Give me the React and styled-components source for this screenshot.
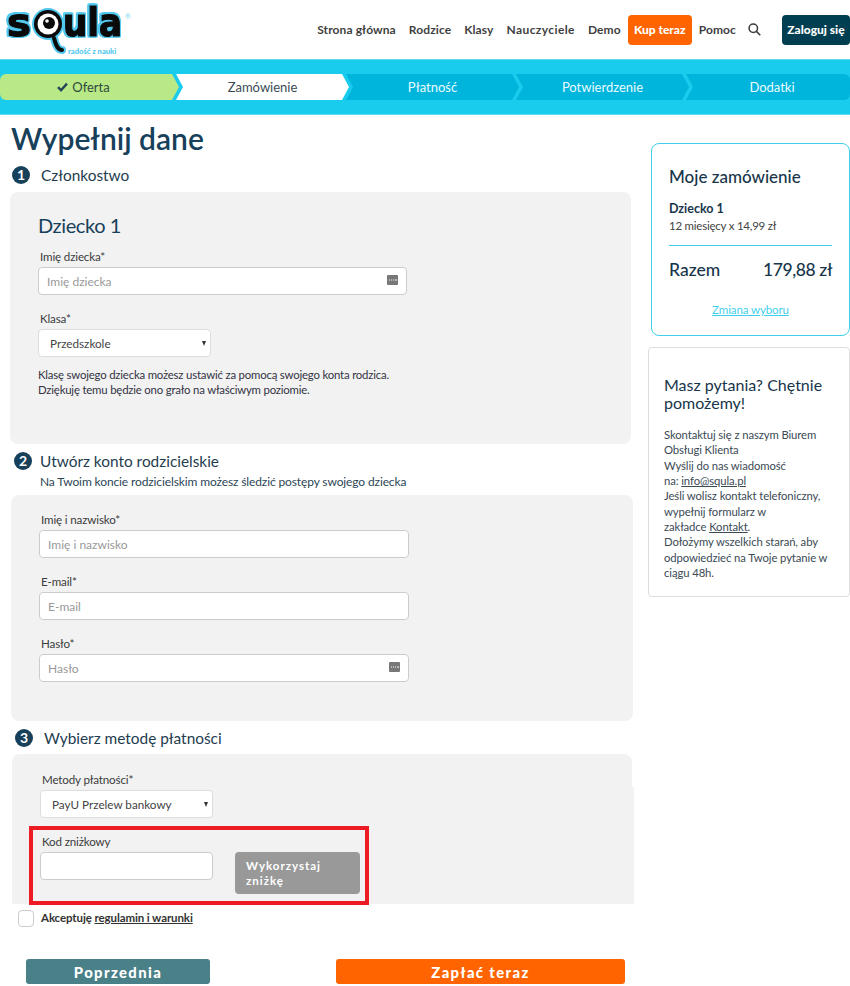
import React from 'react';
import styled, { createGlobalStyle } from 'styled-components';

const Global = createGlobalStyle`
  html, body { margin: 0; padding: 0; background: #fff; }
  body { font-family: Lato, "Noto Sans", sans-serif; color: #1b3a4b; overflow: hidden; }
  * { box-sizing: border-box; }
`;

const Page = styled.div`
  width: 850px;
  height: 986px;
  overflow: hidden;
  background: #fff;
`;

const Header = styled.header`
  height: 59px;
  display: flex;
  align-items: center;
  justify-content: space-between;
`;

const LogoBox = styled.svg`
  display: block;
  width: 135px;
  height: 59px;
`;

const Nav = styled.nav`
  display: flex;
  align-items: center;
  height: 30px;
`;

const NavLink = styled.a`
  font-size: 12px;
  font-weight: 700;
  letter-spacing: ${p => p.$ls ?? 0.1}px;
  color: #3f3f3f;
  margin-right: ${p => p.$gap ?? 13}px;
  white-space: nowrap;
`;

const NavButton = styled.a`
  display: flex;
  align-items: center;
  justify-content: center;
  height: 30px;
  width: ${p => p.$w}px;
  margin-right: ${p => p.$gap ?? 0}px;
  border-radius: 4px;
  background: ${p => p.$bg};
  color: #fff;
  font-size: 12px;
  font-weight: 900;
  white-space: nowrap;
`;

const SearchIcon = styled.svg`
  width: 13px;
  height: 13px;
  margin-right: 21px;
  margin-top: -1px;
  display: block;
`;

const StepBand = styled.div`
  height: 56px;
  padding: 14px 0;
  background: #19cbec;
  border-top: 1px solid #5fdcf2;
  border-bottom: 1px solid #5fdcf2;
  display: flex;
  align-items: flex-start;
`;

const Step = styled.div`
  height: 26px;
  flex: ${p => (p.$last ? '1' : `0 0 ${p.$first ? 179 : 173}px`)};
  margin-left: ${p => (p.$first ? 0 : -3)}px;
  padding: ${p => (p.$first ? '0 12px 0 0' : p.$last ? '0 0 0 8px' : '0')};
  display: flex;
  align-items: center;
  justify-content: center;
  gap: 4px;
  font-size: 13px;
  background: ${p => p.$bg};
  color: ${p => p.$color};
  border-radius: ${p => (p.$first ? '6px 0 0 6px' : p.$last ? '0 6px 6px 0' : '0')};
  clip-path: ${p =>
    p.$first
      ? 'polygon(0 0, calc(100% - 7px) 0, 100% 50%, calc(100% - 7px) 100%, 0 100%)'
      : p.$last
      ? 'polygon(0 0, 100% 0, 100% 100%, 0 100%, 7px 50%)'
      : 'polygon(0 0, calc(100% - 7px) 0, 100% 50%, calc(100% - 7px) 100%, 0 100%, 7px 50%)'};
`;

const Main = styled.main`
  display: flex;
  align-items: flex-start;
`;

const Left = styled.section`
  flex: 0 0 640px;
  width: 640px;
`;

const Right = styled.aside`
  flex: 1;
  padding-top: 28px;
  display: flex;
  flex-direction: column;
  align-items: flex-end;
`;

const Title = styled.h1`
  margin: 5px 0 0 11px;
  font-size: 30px;
  line-height: 36px;
  font-weight: 600;
  color: #17405a;
`;

const SectionHead = styled.div`
  display: flex;
  align-items: center;
  height: 18px;
  margin: ${p => p.$top}px 0 0 ${p => p.$left}px;
  gap: ${p => p.$gap}px;
`;

const Bullet = styled.span`
  flex: 0 0 18px;
  width: 18px;
  height: 18px;
  border-radius: 50%;
  background: #17405a;
  color: #fff;
  font-size: 14px;
  font-weight: 700;
  line-height: 18px;
  text-align: center;
`;

const SectionTitle = styled.h2`
  margin: -1px 0 0;
  font-size: 15.4px;
  font-weight: 400;
  color: #1f3d4f;
  white-space: nowrap;
`;

const SectionSub = styled.p`
  margin: 4px 0 0 40px;
  font-size: 12px;
  letter-spacing: -0.12px;
  line-height: 16px;
  color: #2c4656;
`;

const Panel = styled.div`
  position: relative;
  background: #f2f2f2;
  border-radius: ${p => (p.$open ? '8px 8px 0 0' : '8px')};
  margin: ${p => p.$top}px 0 0 ${p => p.$left}px;
  width: ${p => p.$w}px;
  height: ${p => p.$h}px;
  padding: ${p => p.$pad};
`;

const PanelStep = styled.span`
  position: absolute;
  right: -2px;
  top: 33px;
  bottom: 0;
  width: 2px;
  background: #f2f2f2;
`;

const ChildName = styled.h3`
  margin: 0 0 11px;
  font-size: 20px;
  letter-spacing: -0.4px;
  line-height: 26px;
  font-weight: 400;
  color: #17405a;
`;

const Label = styled.label`
  display: block;
  margin: 0 0 3px 2px;
  padding-top: 1px;
  font-size: 11.6px;
  letter-spacing: -0.15px;
  line-height: 14px;
  color: #3c3c3c;
`;

const Field = styled.div`
  position: relative;
  width: ${p => p.$w}px;
  margin-bottom: ${p => p.$mb ?? 16}px;
`;

const Input = styled.input`
  display: block;
  width: 100%;
  height: 28px;
  padding: 0 8px;
  border: 1px solid #ccc;
  border-radius: 4px;
  background: #fff;
  font-family: Lato, sans-serif;
  font-size: 12px;
  color: #333;
  &::placeholder { color: #999; opacity: 1; }
`;

const KeyIcon = styled.svg`
  position: absolute;
  right: 9px;
  top: 8px;
  width: 11px;
  height: 10px;
`;

const SelectWrap = styled.div`
  position: relative;
  width: 173px;
  &::after {
    content: '';
    position: absolute;
    right: 5px;
    top: 12px;
    border-left: 2.5px solid transparent;
    border-right: 2.5px solid transparent;
    border-top: 5px solid #333;
    pointer-events: none;
  }
`;

const Select = styled.select`
  display: block;
  width: 100%;
  height: 28px;
  padding: 0 0 0 11px;
  appearance: none;
  border: 1px solid #ddd;
  border-radius: 4px;
  background: #fff;
  font-family: Lato, sans-serif;
  font-size: 11.7px;
  color: #444;
`;

const Help = styled.p`
  margin: 10px 0 0;
  font-size: 11.4px;
  letter-spacing: -0.2px;
  line-height: 15px;
  color: #334;
`;

const RedBox = styled.div`
  width: 340px;
  height: 79px;
  margin: 8px 0 0 -11px;
  padding: 4px 0 0 7px;
  border: 4px solid #ed1c24;
`;

const RedRow = styled.div`
  display: flex;
  align-items: flex-start;
  gap: 22px;
`;

const DiscountButton = styled.button`
  width: 125px;
  height: 42px;
  padding: 0 11px;
  border: 0;
  border-radius: 4px;
  background: #999;
  color: #fff;
  font-family: Lato, sans-serif;
  font-size: 11.5px;
  font-weight: 700;
  letter-spacing: 1px;
  line-height: 15px;
  text-align: left;
`;

const TermsRow = styled.div`
  display: flex;
  align-items: center;
  gap: 7px;
  margin: 6px 0 0 18px;
  font-size: 11.5px;
  font-weight: 700;
  letter-spacing: -0.1px;
  color: #333;
`;

const CheckBox = styled.span`
  width: 16px;
  height: 17px;
  background: #fff;
  border: 1px solid #ccc;
  border-radius: 4px;
`;

const TermsText = styled.span`
  margin-top: -3px;
`;

const Underlined = styled.a`
  text-decoration: underline;
  color: ${p => p.$color ?? 'inherit'};
`;

const Actions = styled.div`
  display: flex;
  margin: 32px 0 0 26px;
  gap: 126px;
`;

const ActionButton = styled.button`
  width: ${p => p.$w}px;
  height: 25px;
  border: 0;
  border-radius: 3px;
  background: ${p => p.$bg};
  color: #fff;
  font-family: Lato, sans-serif;
  font-size: 14.8px;
  font-weight: 900;
  letter-spacing: 1.4px;
`;

const OrderCard = styled.div`
  width: 199px;
  height: 193px;
  padding: 22px 17px 0;
  border: 1px solid #40d0ec;
  border-radius: 8px;
`;

const CardTitle = styled.h3`
  margin: 0;
  font-size: ${p => p.$size}px;
  line-height: ${p => p.$lh}px;
  font-weight: ${p => p.$weight};
  color: #17354a;
`;

const OrderName = styled.div`
  margin-top: 13px;
  font-size: 12.5px;
  line-height: 16px;
  font-weight: 700;
  color: #17354a;
`;

const OrderLine = styled.div`
  font-size: 11.5px;
  letter-spacing: -0.23px;
  line-height: 17px;
  color: #444;
`;

const Rule = styled.div`
  margin-top: 11px;
  height: 1px;
  background: #40d0ec;
`;

const TotalRow = styled.div`
  display: flex;
  justify-content: space-between;
  margin-top: 13px;
  font-size: 17.5px;
  line-height: 22px;
  font-weight: 500;
  color: #17354a;
`;

const TotalValue = styled.span`
  letter-spacing: -0.4px;
`;

const ChangeLink = styled.div`
  margin-top: 22px;
  text-align: center;
  font-size: 11.5px;
  letter-spacing: -0.1px;
`;

const HelpCard = styled.div`
  width: 202px;
  height: 250px;
  margin-top: 11px;
  padding: 28px 15px 0;
  border: 1px solid #ddd;
  border-radius: 4px;
`;

const HelpText = styled.p`
  margin: 15px 0 0;
  font-size: 11.3px;
  letter-spacing: -0.1px;
  line-height: 15.35px;
  color: #3b4a55;
`;

const LogoLetters = styled.g`
  font-family: "DejaVu Sans", sans-serif;
  font-weight: 700;
  font-size: 39px;
  fill: #0a0a0a;
  stroke: #0a0a0a;
  stroke-width: 1.2px;
  filter: drop-shadow(1.5px 0 0 #52c8ee) drop-shadow(-1.5px 0 0 #52c8ee) drop-shadow(0 1.5px 0 #52c8ee) drop-shadow(0 -1.5px 0 #52c8ee);
`;

const Key = () => (
  <KeyIcon viewBox="0 0 11 10">
    <rect width="11" height="10" rx="1" fill="#777" />
    <path d="M2 5h1M4 5h1M6 5h1M9 4v2" stroke="#fff" strokeWidth="1" />
  </KeyIcon>
);

const Logo = () => (
  <LogoBox viewBox="0 0 135 59">
    <LogoLetters>
      <text x="7" y="36" textLength="24" lengthAdjust="spacingAndGlyphs">s</text>
      <text x="63" y="36" textLength="59" lengthAdjust="spacingAndGlyphs">ula</text>
    </LogoLetters>
    <path d="M54 38 C56 46 58 50 62 50" fill="none" stroke="#52c8ee" strokeWidth="8" strokeLinecap="round" />
    <circle cx="48" cy="24" r="16" fill="#52c8ee" />
    <path d="M54 38 C56 46 58 50 62 50" fill="none" stroke="#0a0a0a" strokeWidth="4" strokeLinecap="round" />
    <circle cx="48" cy="24" r="14" fill="#0a0a0a" />
    <circle cx="48" cy="24" r="10.5" fill="#fff" />
    <circle cx="49" cy="23" r="6" fill="#0a0a0a" />
    <circle cx="47" cy="21" r="1.8" fill="#fff" />
    <text x="68" y="54" fontFamily="Lato, sans-serif" fontWeight="900" fontSize="7.6" fill="#52c8ee">radość z nauki</text>
    <text x="125" y="19" fontFamily="Lato, sans-serif" fontSize="7" fill="#7fd6f0">®</text>
  </LogoBox>
);

const steps = [
  { label: 'Oferta', bg: '#b9e986', color: '#2d4a3a', first: true, check: true },
  { label: 'Zamówienie', bg: '#fff', color: '#3a4a55' },
  { label: 'Płatność', bg: '#00b5dc', color: '#e9fbff' },
  { label: 'Potwierdzenie', bg: '#00b5dc', color: '#e9fbff' },
  { label: 'Dodatki', bg: '#00b5dc', color: '#e9fbff', last: true },
];

export default function App() {
  return (
    <Page>
      <Global />
      <Header>
        <Logo />
        <Nav>
          <NavLink>Strona główna</NavLink>
          <NavLink>Rodzice</NavLink>
          <NavLink>Klasy</NavLink>
          <NavLink $ls={0.4}>Nauczyciele</NavLink>
          <NavLink $gap={7}>Demo</NavLink>
          <NavButton $w={64} $bg="#ff6400" $gap={7}>Kup teraz</NavButton>
          <NavLink $gap={12}>Pomoc</NavLink>
          <SearchIcon viewBox="0 0 13 13" fill="none" stroke="#3a3a3a" strokeWidth="1.5">
            <circle cx="5.3" cy="5.3" r="4.2" />
            <path d="M8.4 8.4 12.3 12.3" />
          </SearchIcon>
          <NavButton $w={68} $bg="#003f52">Zaloguj się</NavButton>
        </Nav>
      </Header>

      <StepBand>
        {steps.map(s => (
          <Step key={s.label} $bg={s.bg} $color={s.color} $first={s.first} $last={s.last}>
            {s.check && (
              <svg width="11" height="10" viewBox="0 0 11 10">
                <path d="M1 5.2 4 8.2 10 1.6" fill="none" stroke="#24465a" strokeWidth="2.4" />
              </svg>
            )}
            {s.label}
          </Step>
        ))}
      </StepBand>

      <Main>
        <Left>
          <Title>Wypełnij dane</Title>

          <SectionHead $top={10} $left={12} $gap={11}>
            <Bullet>1</Bullet>
            <SectionTitle>Członkostwo</SectionTitle>
          </SectionHead>
          <Panel $top={8} $left={10} $w={621} $h={252} $pad="20px 28px 0">
            <ChildName>Dziecko 1</ChildName>
            <Label>Imię dziecka*</Label>
            <Field $w={369}>
              <Input placeholder="Imię dziecka" />
              <Key />
            </Field>
            <Label>Klasa*</Label>
            <SelectWrap>
              <Select defaultValue="p"><option value="p">Przedszkole</option></Select>
            </SelectWrap>
            <Help>
              Klasę swojego dziecka możesz ustawić za pomocą swojego konta rodzica.
              <br />
              Dziękuję temu będzie ono grało na właściwym poziomie.
            </Help>
          </Panel>

          <SectionHead $top={8} $left={14} $gap={8}>
            <Bullet>2</Bullet>
            <SectionTitle>Utwórz konto rodzicielskie</SectionTitle>
          </SectionHead>
          <SectionSub>Na Twoim koncie rodzicielskim możesz śledzić postępy swojego dziecka</SectionSub>
          <Panel $top={5} $left={11} $w={622} $h={226} $pad="17px 28px 0">
            <Label>Imię i nazwisko*</Label>
            <Field $w={370}><Input placeholder="Imię i nazwisko" /></Field>
            <Label>E-mail*</Label>
            <Field $w={370}><Input placeholder="E-mail" /></Field>
            <Label>Hasło*</Label>
            <Field $w={370}>
              <Input placeholder="Hasło" />
              <Key />
            </Field>
          </Panel>

          <SectionHead $top={8} $left={15} $gap={11}>
            <Bullet>3</Bullet>
            <SectionTitle>Wybierz metodę płatności</SectionTitle>
          </SectionHead>
          <Panel $open $top={7} $left={12} $w={620} $h={150} $pad="18px 28px 0">
            <PanelStep />
            <Label>Metody płatności*</Label>
            <SelectWrap>
              <Select defaultValue="p"><option value="p">PayU Przelew bankowy</option></Select>
            </SelectWrap>
            <RedBox>
              <Label>Kod zniżkowy</Label>
              <RedRow>
                <Field $w={173} $mb={0}><Input /></Field>
                <DiscountButton>Wykorzystaj zniżkę</DiscountButton>
              </RedRow>
            </RedBox>
          </Panel>
          <TermsRow>
            <CheckBox />
            <TermsText>Akceptuję <Underlined>regulamin i warunki</Underlined></TermsText>
          </TermsRow>
          <Actions>
            <ActionButton $w={184} $bg="#4a8087">Poprzednia</ActionButton>
            <ActionButton $w={289} $bg="#ff6400">Zapłać teraz</ActionButton>
          </Actions>
        </Left>

        <Right>
          <OrderCard>
            <CardTitle $size={17} $lh={22} $weight={500}>Moje zamówienie</CardTitle>
            <OrderName>Dziecko 1</OrderName>
            <OrderLine>12 miesięcy x 14,99 zł</OrderLine>
            <Rule />
            <TotalRow><span>Razem</span><TotalValue>179,88 zł</TotalValue></TotalRow>
            <ChangeLink><Underlined $color="#3fcfea">Zmiana wyboru</Underlined></ChangeLink>
          </OrderCard>
          <HelpCard>
            <CardTitle $size={16} $lh={18} $weight={400}>Masz pytania? Chętnie pomożemy!</CardTitle>
            <HelpText>
              Skontaktuj się z naszym Biurem Obsługi Klienta
              <br />Wyślij do nas wiadomość
              <br />na: <Underlined>info@squla.pl</Underlined>
              <br />Jeśli wolisz kontakt telefoniczny, wypełnij formularz w
              <br />zakładce <Underlined>Kontakt</Underlined>.
              <br />Dołożymy wszelkich starań, aby odpowiedzieć na Twoje pytanie w ciągu 48h.
            </HelpText>
          </HelpCard>
        </Right>
      </Main>
    </Page>
  );
}
